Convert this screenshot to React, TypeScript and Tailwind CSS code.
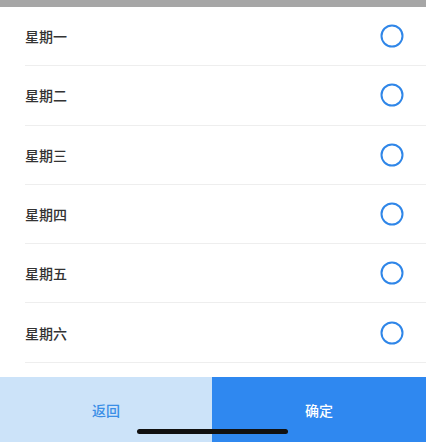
const days = ["星期一", "星期二", "星期三", "星期四", "星期五", "星期六"];

const Circle = () => (
  <svg width="24" height="24" viewBox="0 0 24 24" fill="none">
    <circle cx="12" cy="12" r="10.5" stroke="#2f86e8" strokeWidth="2" />
  </svg>
);

export default function App() {
  return (
    <div
      className="relative w-[426px] h-[442px] overflow-hidden bg-white flex flex-col"
      style={{ fontFamily: '"Noto Sans CJK SC", "Noto Sans", sans-serif' }}
    >
      <div className="h-[7px] bg-[#a6a6a6]" />
      <ul className="pl-[25px]">
        {days.map((d) => (
          <li
            key={d}
            className="h-[59.3px] flex items-center justify-between pr-[22px] border-b border-[#eeeeee]"
          >
            <span className="text-sm font-medium text-[#333333]">{d}</span>
            <Circle />
          </li>
        ))}
      </ul>
      <div className="mt-auto h-[65px] flex text-sm font-medium">
        <button className="w-[212px] bg-[#cce3f9] text-[#3a8ee6]">返回</button>
        <button className="flex-1 bg-[#2f88f0] text-white">确定</button>
      </div>
      <div className="absolute left-[137px] top-[429px] w-[151px] h-[5px] rounded-full bg-[#111111]" />
    </div>
  );
}
